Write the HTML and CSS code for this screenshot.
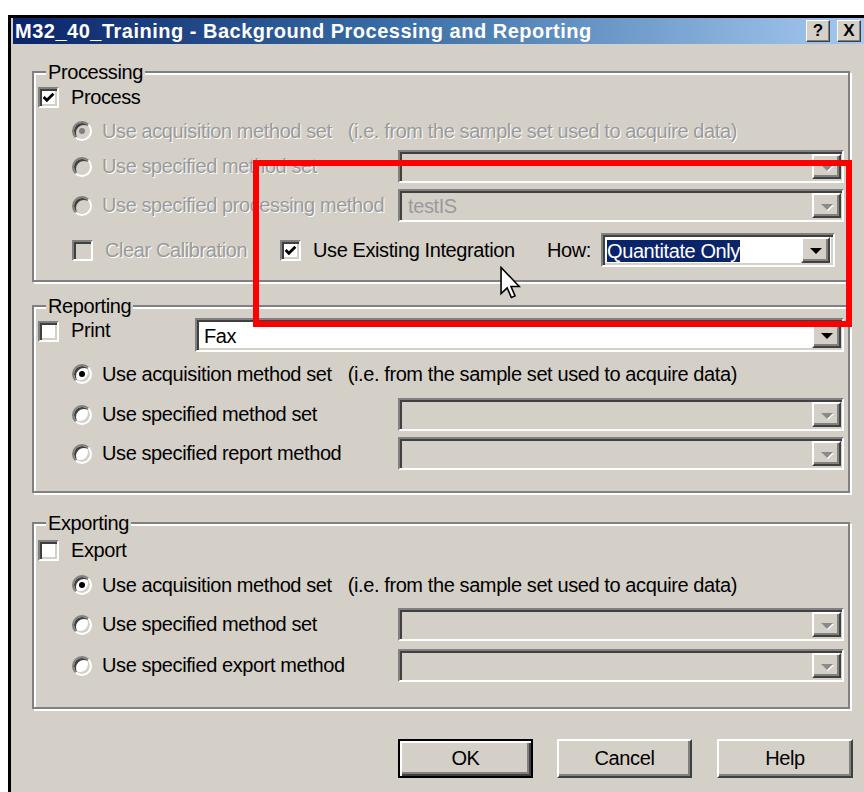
FILE: index.html
```html
<!DOCTYPE html>
<html lang="en">
<head>
<meta charset="utf-8">
<title>Background Processing and Reporting</title>
<link rel="stylesheet" href="styles.css">
</head>
<body>
<div class="window">
  <div class="titlebar">
    <span class="title">M32_40_Training - Background Processing and Reporting</span>
    <span class="tbtns"><span class="tbtn">?</span><span class="tbtn">X</span></span>
  </div>

  <div class="client">
    <fieldset class="group g-proc">
      <legend>Processing</legend>
      <div class="checkrow">
        <span class="cb"><svg viewBox="0 0 12 12"><path d="M1.5 5.5 L4.5 8.5 L10.5 2.5" fill="none" stroke="#000" stroke-width="2.6"/></svg></span>
        <span class="cblabel">Process</span>
      </div>
      <div class="options">
        <div class="opt row-a dis">
          <span class="radio on"></span><span>Use acquisition method set</span><span class="note">(i.e. from the sample set used to acquire data)</span>
        </div>
        <div class="opt row-b dis">
          <span class="radio"></span><span class="lbl">Use specified method set</span>
          <div class="combo wide"><span class="val"></span><span class="dd"></span></div>
        </div>
        <div class="opt row-c dis">
          <span class="radio"></span><span class="lbl">Use specified processing method</span>
          <div class="combo wide"><span class="val">testIS</span><span class="dd"></span></div>
        </div>
        <div class="opt row-d">
          <div class="clearcal dis">
            <span class="cb"></span><span class="cblabel">Clear Calibration</span>
          </div>
          <div class="existing">
            <span class="cb"><svg viewBox="0 0 12 12"><path d="M1.5 5.5 L4.5 8.5 L10.5 2.5" fill="none" stroke="#000" stroke-width="2.6"/></svg></span>
            <span class="cblabel">Use Existing Integration</span>
          </div>
          <span class="how">How:</span>
          <div class="combo white how-combo"><span class="val"><span class="sel">Quantitate Only</span></span><span class="dd"></span></div>
        </div>
      </div>
    </fieldset>

    <fieldset class="group g-rep">
      <legend>Reporting</legend>
      <div class="printrow">
        <div class="printlabel">
          <span class="cb"></span><span class="cblabel">Print</span>
        </div>
        <div class="combo white fax"><span class="val">Fax</span><span class="dd"></span></div>
      </div>
      <div class="options">
        <div class="opt row-a">
          <span class="radio on"></span><span>Use acquisition method set</span><span class="note">(i.e. from the sample set used to acquire data)</span>
        </div>
        <div class="opt row-b">
          <span class="radio"></span><span class="lbl">Use specified method set</span>
          <div class="combo wide dis"><span class="val"></span><span class="dd"></span></div>
        </div>
        <div class="opt row-c">
          <span class="radio"></span><span class="lbl">Use specified report method</span>
          <div class="combo wide dis"><span class="val"></span><span class="dd"></span></div>
        </div>
      </div>
    </fieldset>

    <fieldset class="group g-exp">
      <legend>Exporting</legend>
      <div class="checkrow">
        <span class="cb"></span><span class="cblabel">Export</span>
      </div>
      <div class="options">
        <div class="opt row-a">
          <span class="radio on"></span><span>Use acquisition method set</span><span class="note">(i.e. from the sample set used to acquire data)</span>
        </div>
        <div class="opt row-b">
          <span class="radio"></span><span class="lbl">Use specified method set</span>
          <div class="combo wide dis"><span class="val"></span><span class="dd"></span></div>
        </div>
        <div class="opt row-c">
          <span class="radio"></span><span class="lbl">Use specified export method</span>
          <div class="combo wide dis"><span class="val"></span><span class="dd"></span></div>
        </div>
      </div>
    </fieldset>

    <div class="buttons">
      <span class="btn default">OK</span>
      <span class="btn">Cancel</span>
      <span class="btn help">Help</span>
    </div>
  </div>

  <div class="highlight"></div>
  <svg class="pointer" viewBox="0 0 12 19" width="21" height="34"><path d="M0.6 0.6 V15.6 L4.1 12.3 L6.5 17.8 L8.6 16.9 L6.3 11.5 H11 Z" fill="#fff" stroke="#000" stroke-width="0.9" stroke-linejoin="miter"/></svg>
</div>
</body>
</html>
```

FILE: styles.css
```css
html, body {
  margin: 0;
  height: 100%;
  overflow: hidden;
  background: #fff;
}

body {
  font-family: "Liberation Sans", Arial, sans-serif;
  font-size: 20px;
  letter-spacing: -0.4px;
  color: #000;
}

/* dialog frame */
.window {
  position: relative;
  margin: 15px 0 0 8px;
  height: 774px;
  border-top: 3px solid #000;
  border-left: 3px solid #000;
  padding-left: 2px;
  background: #d4d0c8;
}

.titlebar {
  display: flex;
  align-items: flex-start;
  height: 26px;
  background: linear-gradient(to right, #0a246a 0%, #3a6ea5 45%, #a6caf0 100%);
}

.title {
  flex: 1;
  padding-left: 2px;
  line-height: 26px;
  font-size: 20px;
  font-weight: bold;
  letter-spacing: 0.5px;
  color: #fff;
  white-space: nowrap;
}

.tbtns {
  display: flex;
  gap: 7px;
  margin: 2px 3px 0 0;
}

.tbtn {
  width: 24px;
  height: 22px;
  box-sizing: border-box;
  border: 1px solid;
  border-color: #fff #404040 #404040 #fff;
  box-shadow: inset -1px -1px #808080;
  background: #d4d0c8;
  font-size: 17px;
  font-weight: bold;
  letter-spacing: 0;
  line-height: 20px;
  text-align: center;
}

/* client area */
.client {
  padding: 17px 14px 0 19px;
}

.group {
  margin: 0;
  padding: 3px 4px 13px;
  min-inline-size: 0;
  border: 2px solid #808080;
  box-shadow: inset 2px 2px #fff, 2px 2px #fff;
}

.group legend {
  margin-left: 8px;
  padding: 0 2px;
  line-height: 22px;
  background: #d4d0c8;
}

.g-rep {
  margin-top: 13px;
  padding: 1px 4px 21px;
}

.g-exp {
  margin-top: 19px;
  padding: 5px 4px 25px;
}

.checkrow {
  display: flex;
  align-items: center;
  height: 22px;
}

.cblabel {
  margin-left: 12px;
  line-height: 22px;
}

.options {
  padding-left: 34px;
  margin-top: 12px;
}

.g-rep .options { margin-top: 11px; }
.g-exp .options { margin-top: 13px; }

.opt {
  display: flex;
  align-items: center;
}

.row-a { height: 22px; }
.row-b { margin-top: 8px; }
.row-c { margin-top: 6px; }
.row-d { margin-top: 11px; height: 34px; }

.g-rep .row-b { margin-top: 13px; }
.g-exp .row-b { margin-top: 12px; }
.g-exp .row-c { margin-top: 8px; }

.opt .radio { margin-right: 10px; }

.lbl { flex: 1; }

.note { margin-left: 16px; }

/* disabled look */
.dis .lbl,
.dis > span:not(.radio):not(.combo),
.dis .cblabel,
.dis .note {
  color: #9a9a9a;
  text-shadow: 1px 1px 0 #fff;
}

/* check box */
.cb {
  flex: none;
  display: flex;
  align-items: center;
  justify-content: center;
  width: 21px;
  height: 21px;
  box-sizing: border-box;
  border: 2px solid;
  border-color: #808080 #fff #fff #808080;
  box-shadow: inset 2px 2px #404040, inset -2px -2px #d4d0c8;
  background: #fff;
}

.cb svg {
  width: 13px;
  height: 13px;
}

.dis .cb { background: #d4d0c8; }

/* radio button */
.radio {
  flex: none;
  position: relative;
  width: 20px;
  height: 20px;
  box-sizing: border-box;
  border-radius: 50%;
  border: 2px solid;
  border-color: #808080 #fff #fff #808080;
  box-shadow: inset 2px 2px #404040, inset -2px -2px #d4d0c8;
  background: #fff;
}

.radio.on::after {
  content: "";
  position: absolute;
  left: 50%;
  top: 50%;
  width: 6px;
  height: 6px;
  margin: -3px 0 0 -3px;
  border-radius: 50%;
  background: #000;
}

.dis .radio { background: #d4d0c8; }
.dis .radio.on::after { background: #808080; }

/* combo box */
.combo {
  display: flex;
  height: 33px;
  box-sizing: border-box;
  border: 2px solid;
  border-color: #808080 #fff #fff #808080;
  box-shadow: inset 2px 2px #404040, inset -2px -2px #d4d0c8;
  padding: 2px 1px 2px 2px;
  background: #d4d0c8;
}

.combo.wide { width: 446px; }

.combo.white { background: #fff; }

.val {
  flex: 1;
  padding-left: 6px;
  line-height: 27px;
  overflow: hidden;
  white-space: nowrap;
}

.dis .val,
.dis.combo .val {
  color: #9a9a9a;
}

.dd {
  flex: none;
  display: flex;
  align-items: center;
  justify-content: center;
  width: 29px;
  box-sizing: border-box;
  border: 2px solid;
  border-color: #fff #404040 #404040 #fff;
  box-shadow: inset -2px -2px #808080;
  background: #d4d0c8;
}

.dd::after {
  content: "";
  margin-top: 2px;
  border-left: 6px solid transparent;
  border-right: 6px solid transparent;
  border-top: 6px solid #000;
}

.dis .dd::after {
  border-top-color: #8a8a8a;
  filter: drop-shadow(1px 1px 0 #fff);
}

/* processing: last row */
.clearcal {
  display: flex;
  align-items: center;
  width: 208px;
}

.existing {
  display: flex;
  align-items: center;
  width: 267px;
}

.how {
  width: 54px;
}

.how-combo {
  width: 234px;
  height: 34px;
  padding: 2px 3px 2px 2px;
}

.how-combo .val { padding-left: 2px; line-height: 22px; padding-top: 3px; }

.sel {
  background: #0a246a;
  color: #fff;
  display: inline-block;
  line-height: 22px;
}

/* reporting: print row */
.printrow {
  display: flex;
  align-items: flex-start;
  height: 34px;
}

.printlabel {
  display: flex;
  align-items: flex-start;
  width: 157px;
}

.printlabel .cb { margin-top: 3px; }
.printlabel .cblabel { margin-top: 1px; }

.fax {
  flex: 1;
  height: 34px;
}

.fax .val { line-height: 28px; padding-left: 5px; }

/* dialog buttons */
.buttons {
  display: flex;
  justify-content: flex-end;
  gap: 24px;
  margin: 30px -3px 0 0;
}

.btn {
  width: 135px;
  height: 39px;
  box-sizing: border-box;
  border: 2px solid;
  border-color: #fff #404040 #404040 #fff;
  box-shadow: inset -2px -2px #808080;
  background: #d4d0c8;
  text-align: center;
  line-height: 35px;
}

.btn.help { width: 136px; margin-left: 1px; }

.btn.default {
  border-color: #000;
  box-shadow: inset 2px 2px #fff, inset -2px -2px #404040, inset -4px -4px #808080;
}

/* annotation frame and mouse pointer drawn over the dialog */
.highlight {
  position: absolute;
  left: 242px;
  top: 142px;
  width: 599px;
  height: 167px;
  box-sizing: border-box;
  border: 6px solid #ff0000;
}

.pointer {
  position: absolute;
  left: 489px;
  top: 248px;
}
```
